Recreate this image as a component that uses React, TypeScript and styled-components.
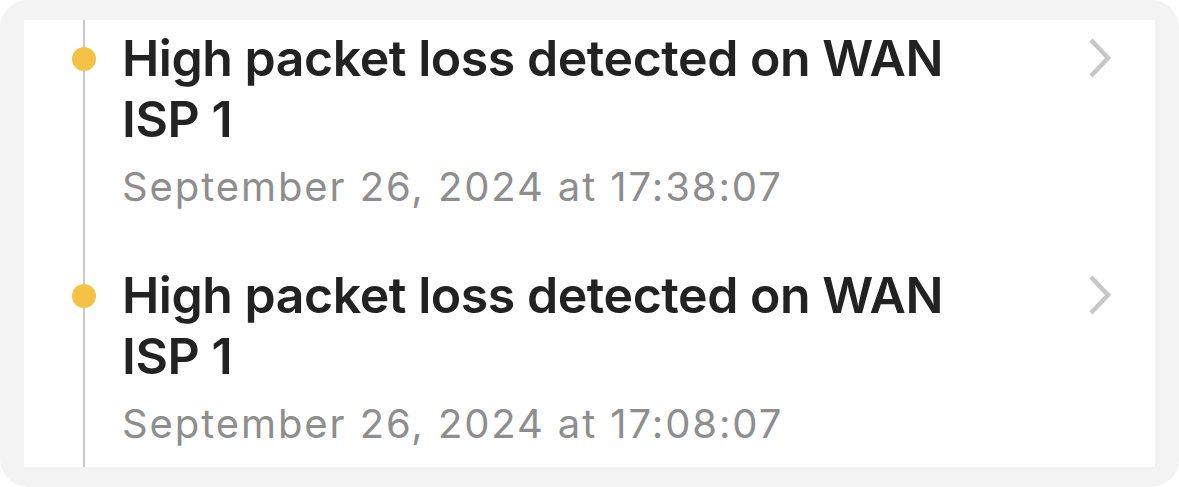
import React from "react";
import styled, { createGlobalStyle } from "styled-components";

const Global = createGlobalStyle`
  html, body { margin: 0; padding: 0; background: #ffffff; }
  body { font-family: Inter, "Noto Sans", sans-serif; -webkit-font-smoothing: antialiased; }
`;

const Frame = styled.div`
  width: 1179px;
  height: 487px;
  box-sizing: border-box;
  background: #f3f3f3;
  border-radius: 28px;
  padding: 20px 24px;
`;

const Panel = styled.div`
  height: 447px;
  background: #ffffff;
  overflow: hidden;
  display: flex;
`;

const Timeline = styled.ul`
  list-style: none;
  margin: 0 0 0 59px;
  padding: 0;
  border-left: 2px solid #c9c9c9;
  flex: 1;
  display: flex;
  flex-direction: column;
  gap: 47px;
`;

const Item = styled.li`
  position: relative;
  display: flex;
  align-items: flex-start;
  padding: 8px 42px 0 37px;
`;

const Dot = styled.span`
  position: absolute;
  left: -13px;
  top: 27px;
  width: 24px;
  height: 24px;
  border-radius: 50%;
  background: #f4c244;
`;

const Body = styled.div`
  flex: 1;
  max-width: 880px;
  display: flex;
  flex-direction: column;
  gap: 14px;
`;

const Title = styled.div`
  font-size: 50px;
  line-height: 61px;
  font-weight: 600;
  color: #222222;
  letter-spacing: -0.45px;
`;

const DateText = styled.div`
  font-size: 40px;
  line-height: 46px;
  font-weight: 400;
  color: #8e8e8e;
  letter-spacing: 1.9px;
`;

const Chevron = styled.svg`
  margin-left: auto;
  margin-top: 9px;
  flex: none;
`;

const events = [
  { title: "High packet loss detected on WAN ISP 1", date: "September 26, 2024 at 17:38:07" },
  { title: "High packet loss detected on WAN ISP 1", date: "September 26, 2024 at 17:08:07" },
];

export default function App() {
  return (
    <>
      <Global />
      <Frame>
        <Panel>
          <Timeline>
            {events.map((e, i) => (
              <Item key={i}>
                <Dot />
                <Body>
                  <Title>{e.title}</Title>
                  <DateText>{e.date}</DateText>
                </Body>
                <Chevron width="26" height="42" viewBox="0 0 26 42">
                  <polyline points="4,3 21,21 4,39" fill="none" stroke="#c7c7c7" strokeWidth="4.5" strokeLinejoin="miter" />
                </Chevron>
              </Item>
            ))}
          </Timeline>
        </Panel>
      </Frame>
    </>
  );
}
